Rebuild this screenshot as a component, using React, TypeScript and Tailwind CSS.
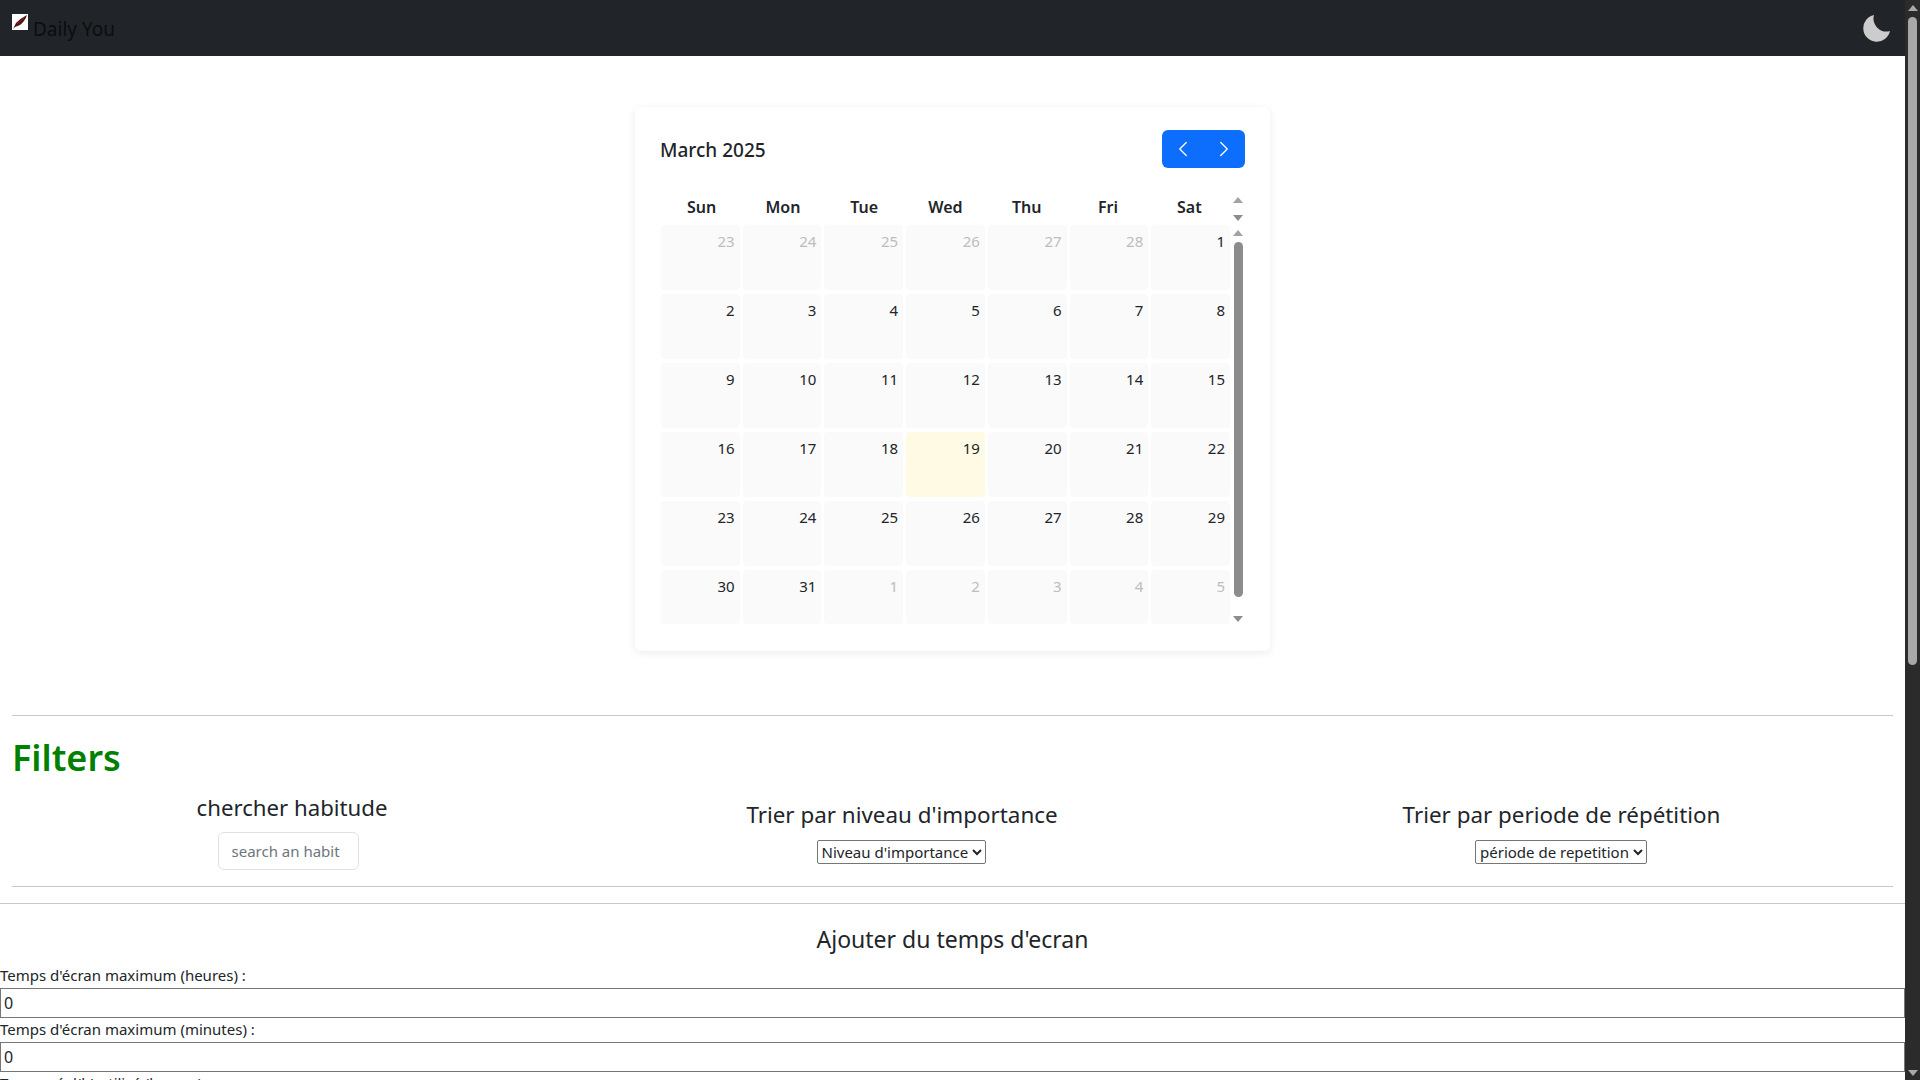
import React from "react";
import { ChevronLeft, ChevronRight } from "lucide-react";

const font = "font-['Noto_Sans','Open_Sans',sans-serif]";

const days = ["Sun", "Mon", "Tue", "Wed", "Thu", "Fri", "Sat"];

const weeks = [
  [[23, 1], [24, 1], [25, 1], [26, 1], [27, 1], [28, 1], [1, 0]],
  [[2, 0], [3, 0], [4, 0], [5, 0], [6, 0], [7, 0], [8, 0]],
  [[9, 0], [10, 0], [11, 0], [12, 0], [13, 0], [14, 0], [15, 0]],
  [[16, 0], [17, 0], [18, 0], [19, 2], [20, 0], [21, 0], [22, 0]],
  [[23, 0], [24, 0], [25, 0], [26, 0], [27, 0], [28, 0], [29, 0]],
  [[30, 0], [31, 0], [1, 1], [2, 1], [3, 1], [4, 1], [5, 1]],
];

const ArrowUp = ({ color }: { color: string }) => (
  <svg width="10" height="6" viewBox="0 0 10 6" className="block">
    <path d="M5 0 L10 6 L0 6 Z" fill={color} />
  </svg>
);

const ArrowDown = ({ color }: { color: string }) => (
  <svg width="10" height="6" viewBox="0 0 10 6" className="block">
    <path d="M0 0 L10 0 L5 6 Z" fill={color} />
  </svg>
);

const Calendar = () => {
  return (
    <div className="mx-auto mt-[51px] w-[635px] h-[544px] rounded-md bg-white px-6 pt-[23px] shadow-[0_2px_8px_rgba(0,0,0,0.08)]">
      <div className="flex items-center justify-between h-[38px] pl-px pr-px">
        <h2 className="mt-[2px] text-[19px] font-medium text-[#212529]">March 2025</h2>
        <div className="flex h-[38px] w-[83px] items-center justify-between rounded-md bg-[#0d6efd] px-[8px] text-white">
          <ChevronLeft size={26} strokeWidth={1.2} />
          <ChevronRight size={26} strokeWidth={1.2} />
        </div>
      </div>
      <div className="mt-[26px] flex">
        <div className="w-[571px] pl-[2px]">
          <div className="grid grid-cols-7 h-[31px]">
            {days.map((d) => (
              <div key={d} className="pt-[1px] text-center text-[16px] font-semibold text-[#212529]">
                {d}
              </div>
            ))}
          </div>
          <div className="flex flex-col gap-1">
            {weeks.map((week, i) => (
              <div key={i} className={`grid grid-cols-7 gap-[3px] ${i === 5 ? "h-[54px]" : "h-[65px]"}`}>
                {week.map(([n, kind], j) => (
                  <div
                    key={j}
                    className={`rounded-sm pr-[5px] pt-1 text-right text-[15px] leading-6 ${
                      kind === 2 ? "bg-[#fffae3]" : "bg-[#fafafa]"
                    } ${kind === 1 ? "text-[#bdbdbd]" : "text-[#212529]"}`}
                  >
                    {n}
                  </div>
                ))}
              </div>
            ))}
          </div>
        </div>
        <div className="ml-[3px] flex w-[10px] flex-col items-center">
          <div className="mt-[3px]"><ArrowUp color="#a3a3a3" /></div>
          <div className="mt-[12px]"><ArrowDown color="#8c8c8c" /></div>
          <div className="mt-[9px]"><ArrowUp color="#a3a3a3" /></div>
          <div className="mt-[6px] h-[355px] w-[9px] rounded-full bg-[#8c8c8c]"></div>
          <div className="mt-[19px]"><ArrowDown color="#8c8c8c" /></div>
        </div>
      </div>
    </div>
  );
};

const App = () => {
  return (
    <div className={`flex h-screen overflow-hidden bg-white text-[#212529] ${font}`}>
      <div className="min-w-0 flex-1 overflow-hidden">
        <nav className="flex h-14 items-start justify-between bg-[#212529]">
          <div className="ml-3 mt-[14px] flex items-start">
            <svg width="16" height="16" viewBox="0 0 16 16" className="block">
              <rect width="16" height="16" fill="#ffffff" />
              <path d="M1 15 L4 9 Q9 4 15 1 Q13 7 8 11 L3 13 Z" fill="#4f1212" />
              <path d="M5 10 L12 4" stroke="#8a2a2a" strokeWidth="1" />
            </svg>
            <span className="ml-[5px] mt-[1px] text-[19px] leading-7 text-[#0b0d0e]">Daily You</span>
          </div>
          <svg width="28" height="28" viewBox="0 0 28 28" className="mr-[14px] mt-[14px] block">
            <path d="M11 1 A13.5 13.5 0 1 0 27 17 A13 13 0 0 1 11 1 Z" fill="#cccccc" />
          </svg>
        </nav>

        <Calendar />

        <hr className="mx-3 mt-[64px] border-t border-[#c8c8c8]" />
        <h1 className="ml-3 mt-[18px] text-[36px] font-semibold leading-[48px] text-[#008000]">Filters</h1>

        <div className="mx-3 mt-[11px] flex h-[66px] items-start">
          <div className="flex w-[560px] flex-col items-center">
            <h4 className="text-[22.2px] leading-[29px]">chercher habitude</h4>
            <input
              placeholder="search an habit"
              className="mt-[10px] ml-[-8px] h-[38px] w-[141px] rounded-md border border-[#dee2e6] bg-white px-[13px] text-[15px] placeholder:text-[#6c757d]"
            />
          </div>
          <div className="flex w-[660px] flex-col items-center pt-[7px]">
            <h4 className="text-[22.4px] leading-[29px]">Trier par niveau d'importance</h4>
            <select className="mt-[11px] ml-[-2px] h-[24px] w-[169px] border border-[#767676] bg-white text-[15px] rounded-[2px] appearance-auto">
              <option>Niveau d'importance</option>
            </select>
          </div>
          <div className="flex flex-1 flex-col items-center pt-[7px]">
            <h4 className="text-[22.4px] leading-[29px] ml-[-2px]">Trier par periode de répétition</h4>
            <select className="mt-[11px] ml-[-3px] h-[24px] w-[172px] border border-[#767676] bg-white text-[15px] rounded-[2px] appearance-auto">
              <option>période de repetition</option>
            </select>
          </div>
        </div>

        <hr className="mx-3 mt-[27px] border-t border-[#c8c8c8]" />
        <hr className="mt-4 border-t border-[#c8c8c8]" />

        <h4 className="mt-[21px] text-center text-[23px] leading-[29px]">Ajouter du temps d'ecran</h4>

        <label className="mt-[11px] mb-[2px] block text-[15px] leading-[21px]">Temps d'écran maximum (heures) :</label>
        <input defaultValue="0" className="block h-[30px] w-full border border-[#767676] px-[3px] text-[16px]" />
        <label className="mt-[1px] mb-[2px] block text-[15px] leading-[21px]">Temps d'écran maximum (minutes) :</label>
        <input defaultValue="0" className="block h-[30px] w-full border border-[#767676] px-[3px] text-[16px]" />
        <label className="mt-[1px] block text-[15px] leading-[21px]">Temps réel(h) utilisé (heures) :</label>
      </div>

      <div className="flex w-[15px] flex-col items-center bg-[#2b2b2b]">
        <div className="mt-[5px]"><ArrowUp color="#a8a8a8" /></div>
        <div className="mt-[6px] h-[648px] w-[9px] rounded-full bg-[#a8a8a8]"></div>
        <div className="mt-auto mb-[4px]"><ArrowDown color="#a8a8a8" /></div>
      </div>
    </div>
  );
};

export default App;
